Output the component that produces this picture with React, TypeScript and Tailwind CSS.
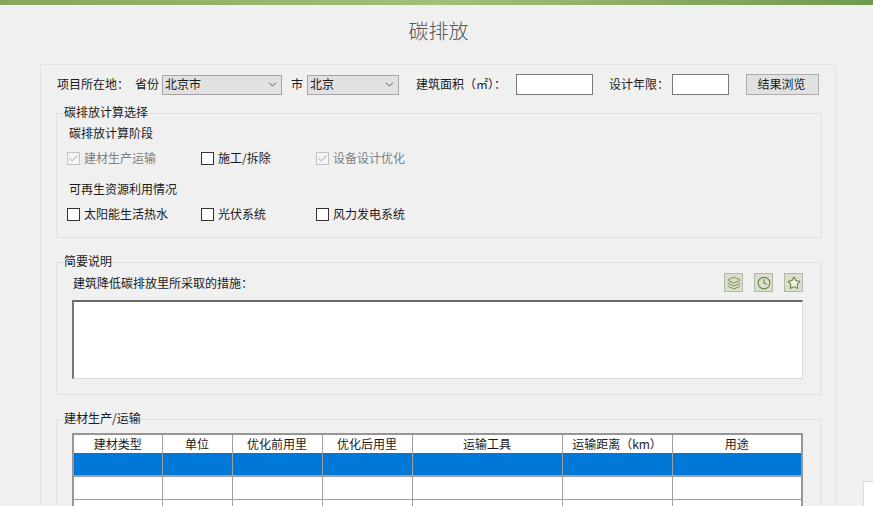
import { ChevronDown, Check, Layers, Clock, Star } from 'lucide-react';

const columns = [
  { title: '建材类型', width: 'w-[88px]' },
  { title: '单位', width: 'w-[70px]' },
  { title: '优化前用里', width: 'w-[90px]' },
  { title: '优化后用里', width: 'w-[90px]' },
  { title: '运输工具', width: 'w-[150px]' },
  { title: '运输距离（km）', width: 'w-[110px]' },
  { title: '用途', width: 'w-[129px]' },
];

function Select({ value, width }: { value: string; width: string }) {
  return (
    <div className={`flex h-[20px] items-center justify-between border border-[#a6a6a6] bg-[#e1e1e1] pl-[2px] pr-[2px] ${width}`}>
      <span className="pb-[2px]">{value}</span>
      <ChevronDown className="h-[13px] w-[13px] text-[#444]" strokeWidth={1.5} />
    </div>
  );
}

function CheckItem({ label, checked, disabled }: { label: string; checked?: boolean; disabled?: boolean }) {
  return (
    <label className={`flex items-center gap-[4px] ${disabled ? 'text-[#808080]' : ''}`}>
      <span className={`flex h-[13px] w-[13px] items-center justify-center border ${disabled ? 'border-[#c4c4c4] bg-[#f4f4f4]' : 'border-[#333] bg-white'}`}>
        {checked && <Check className="h-[11px] w-[11px] text-[#a0a0a0]" strokeWidth={2} />}
      </span>
      {label}
    </label>
  );
}

function IconBox({ children }: { children: React.ReactNode }) {
  return (
    <div className="flex h-[19px] w-[19px] items-center justify-center border border-[#b4b8ac] bg-[#d9dfcd] text-[#5f8232]">
      {children}
    </div>
  );
}

export default function App() {
  return (
    <div className="relative h-[506px] overflow-hidden bg-[#f0f0f0] text-[12px] leading-[16px] text-[#1a1a1a] [font-family:'Noto_Sans_CJK_SC','Liberation_Sans',sans-serif]">
      <div className="h-[5px] bg-gradient-to-r from-[#86a85a] via-[#a3bf76] to-[#6f9a4c]" />

      <h1 className="flex h-[59px] items-center justify-center pb-[7px] pl-[4px] text-[20px] font-light text-[#555]">
        碳排放
      </h1>

      {/* Outer panel */}
      <div className="ml-[40px] h-[460px] w-[796px] border border-[#e2e2e2] pl-[15px] pr-[13px] pt-[9px]">
        {/* Location row */}
        <div className="flex h-[21px] items-center">
          <span className="ml-[1px] w-[78px] pb-[2px]">项目所在地：</span>
          <span className="w-[27px] pb-[2px]">省份</span>
          <Select value="北京市" width="w-[120px]" />
          <span className="ml-[9px] w-[16px] pb-[2px]">市</span>
          <Select value="北京" width="w-[92px]" />
          <span className="ml-[17px] w-[100px] whitespace-nowrap pb-[2px]">建筑面积（㎡）：</span>
          <div className="h-[21px] w-[77px] border border-[#7a7a7a] bg-white" />
          <span className="ml-[16px] w-[63px] pb-[2px]">设计年限：</span>
          <div className="h-[21px] w-[57px] border border-[#7a7a7a] bg-white" />
          <button className="ml-[17px] h-[21px] w-[73px] border border-[#adadad] bg-[#e1e1e1] pb-[2px] pr-[2px]">结果浏览</button>
        </div>

        {/* Calculation options */}
        <fieldset className="mt-[9px] h-[134px] w-[766px] border border-[#e0e0e0]">
          <legend className="ml-[7px] pb-[2px] leading-[16px]">碳排放计算选择</legend>
          <div className="pl-[10px]">
            <div className="ml-[2px] mt-[3px]">碳排放计算阶段</div>
            <div className="mt-[9px] grid grid-cols-[134px_115px_1fr]">
              <CheckItem label="建材生产运输" checked disabled />
              <CheckItem label="施工/拆除" />
              <CheckItem label="设备设计优化" checked disabled />
            </div>
            <div className="ml-[2px] mt-[15px]">可再生资源利用情况</div>
            <div className="mt-[9px] grid grid-cols-[134px_115px_1fr]">
              <CheckItem label="太阳能生活热水" />
              <CheckItem label="光伏系统" />
              <CheckItem label="风力发电系统" />
            </div>
          </div>
        </fieldset>

        {/* Summary */}
        <fieldset className="mt-[15px] h-[142px] w-[765px] border border-[#e0e0e0]">
          <legend className="ml-[7px] pb-[2px] leading-[16px]">简要说明</legend>
          <div className="pl-[15px] pr-[17px]">
            <div className="flex h-[23px] items-center justify-between">
              <span className="ml-[1px]">建筑降低碳排放里所采取的措施：</span>
              <div className="flex gap-[11px]">
                <IconBox><Layers className="h-[14px] w-[14px]" strokeWidth={1.5} /></IconBox>
                <IconBox><Clock className="h-[14px] w-[14px]" strokeWidth={1.75} /></IconBox>
                <IconBox><Star className="h-[14px] w-[14px] fill-[#eef1e2]" strokeWidth={1.75} /></IconBox>
              </div>
            </div>
            <div className="mt-[6px] h-[79px] w-[731px] border-b border-l-2 border-r border-t-2 border-b-[#dcdcdc] border-l-[#767676] border-r-[#dcdcdc] border-t-[#696969] bg-white" />
          </div>
        </fieldset>

        {/* Materials table */}
        <fieldset className="mt-[15px] h-[100px] w-[765px] border border-[#e0e0e0]">
          <legend className="ml-[7px] pb-[2px] leading-[16px]">建材生产/运输</legend>
          <div className="ml-[15px] mt-[5px] w-[731px] border-l-2 border-r-2 border-t-2 border-l-[#969696] border-r-[#969696] border-t-[#969696] bg-white">
            <table className="w-full table-fixed border-collapse">
              <thead>
                <tr className="h-[18px] text-center">
                  {columns.map((c) => (
                    <th key={c.title} className={`border-r border-[#a0a0a0] p-0 font-normal last:border-r-0 ${c.width}`}>
                      {c.title}
                    </th>
                  ))}
                </tr>
              </thead>
              <tbody>
                <tr className="h-[23px] bg-[#0078d7]">
                  {columns.map((c) => (
                    <td key={c.title} className="border-b-2 border-r border-b-[#a0a0a0] border-r-[#a0a0a0] p-0 last:border-r-0" />
                  ))}
                </tr>
                <tr className="h-[23px]">
                  {columns.map((c) => (
                    <td key={c.title} className="border-b border-r border-[#a0a0a0] p-0 last:border-r-0" />
                  ))}
                </tr>
                <tr className="h-[23px]">
                  {columns.map((c) => (
                    <td key={c.title} className="border-r border-[#a0a0a0] p-0 last:border-r-0" />
                  ))}
                </tr>
              </tbody>
            </table>
          </div>
        </fieldset>
      </div>

      {/* Corner of a panel that peeks in at the edge */}
      <div className="absolute left-[863px] top-[481px] h-[30px] w-[20px] border border-[#dcdcdc] bg-white" />
    </div>
  );
}
